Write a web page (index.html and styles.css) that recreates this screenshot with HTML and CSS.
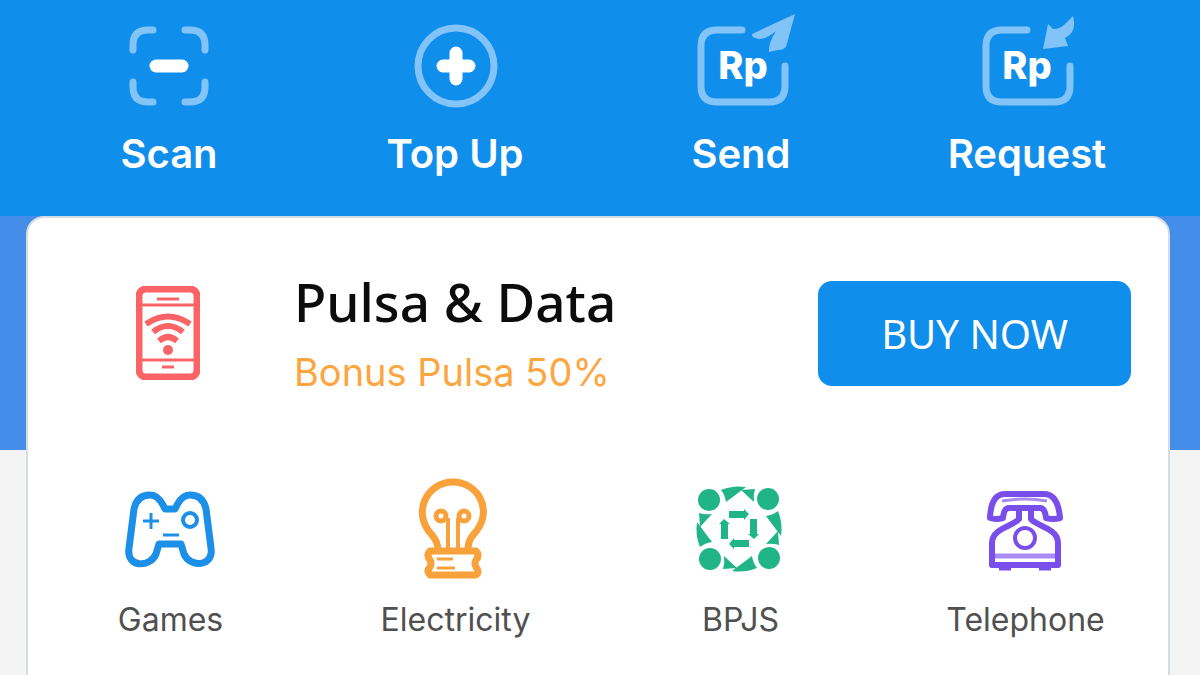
FILE: index.html
```html
<!DOCTYPE html>
<html lang="id">
<head>
<meta charset="UTF-8">
<meta name="viewport" content="width=device-width, initial-scale=1.0">
<title>Wallet</title>
<link rel="stylesheet" href="styles.css">
</head>
<body>

<nav class="actions">
    <a class="action" href="#scan">
        <svg class="action-icon" viewBox="0 0 120 100" fill="none" stroke-linecap="round">
            <path class="soft" d="M24 50V45Q24 30 39 30H44M76 30H81Q96 30 96 45V50M24 82V87Q24 102 39 102H44M76 102H81Q96 102 96 87V82"/>
            <path class="bar" d="M47 66H73"/>
        </svg>
        <span>Scan</span>
    </a>
    <a class="action" href="#topup">
        <svg class="action-icon" viewBox="0 0 120 100" fill="none" stroke-linecap="round">
            <circle class="soft" cx="61" cy="66" r="38"/>
            <path class="bar" d="M48 66H74M61 53V79"/>
        </svg>
        <span>Top Up</span>
    </a>
    <a class="action" href="#send">
        <svg class="action-icon" viewBox="0 0 120 100" fill="none" stroke-linecap="round">
            <path class="soft" d="M61 30H36Q20 30 20 46V86Q20 102 36 102H88Q104 102 104 86V66"/>
            <path class="plane" d="M114 14L105 47Q102 50 97 50L88 52Q87 44 95 31Q86 39 78 39Q70 38 71 34Z"/>
            <text class="rp" x="62" y="79">Rp</text>
        </svg>
        <span>Send</span>
    </a>
    <a class="action" href="#request">
        <svg class="action-icon" viewBox="0 0 120 100" fill="none" stroke-linecap="round">
            <path class="soft" d="M60 30H35Q19 30 19 46V86Q19 102 35 102H87Q103 102 103 86V66"/>
            <path class="plane" d="M106 16C109 27 106 34 98 38L101 46L76 49L81 24L86 29Q94 29 99 23Z"/>
            <text class="rp" x="60" y="79">Rp</text>
        </svg>
        <span>Request</span>
    </a>
</nav>

<main class="content">
    <div class="card">
        <section class="promo">
            <svg class="phone" viewBox="0 0 64 94" fill="none" stroke="#fb6467">
                <rect x="3" y="3" width="58" height="88" rx="7" stroke-width="7"/>
                <path d="M4 19H60M4 74H60" stroke-width="3"/>
                <path d="M21 13H43M26 81H38" stroke-width="3"/>
                <path d="M10 38Q32 23 54 38M17 46Q32 34 47 46M23 55Q32 47 41 55" stroke-width="6"/>
                <circle cx="32" cy="64" r="5" fill="#fb6467" stroke="none"/>
            </svg>
            <div class="promo-text">
                <h1>Pulsa &amp; Data</h1>
                <p>Bonus Pulsa 50%</p>
            </div>
            <button class="buy" type="button">BUY NOW</button>
        </section>

        <section class="services">
            <a class="service" href="#games">
                <svg class="service-icon" viewBox="0 0 100 104" fill="none" stroke="#1c8fe8" stroke-linejoin="round">
                    <path d="M29 19Q16 19 13 33L8 72C5 92 29 92 35 78L38 68H60L63 78C69 92 93 91 90 72L85 33Q82 19 69 19Q61 19 56 29L54 33H44L42 29Q37 19 29 19Z" stroke-width="7"/>
                    <path d="M22 45H38M30 37V53M42 59H58" stroke-width="3"/>
                    <circle cx="69" cy="44" r="7" stroke-width="4"/>
                </svg>
                <span>Games</span>
            </a>
            <a class="service" href="#electricity">
                <svg class="service-icon" viewBox="0 0 100 104" fill="none" stroke="#f9a13a" stroke-linejoin="round">
                    <path d="M32 74Q32 66 26 59C5 37 21 6 47 6C73 6 89 37 67 59Q62 65 62 74" stroke-width="7"/>
                    <path d="M42 73V42M52 73V42" stroke-width="4"/>
                    <circle cx="35" cy="40" r="5" stroke-width="5"/>
                    <circle cx="58" cy="40" r="5" stroke-width="5"/>
                    <path d="M24 75H70Q74 79 70 84Q68 87 70 91Q74 96 70 99H24Q20 95 24 91Q26 87 24 84Q20 79 24 75Z" stroke-width="7"/>
                    <path d="M31 83H47M31 92H49" stroke-width="3"/>
                </svg>
                <span>Electricity</span>
            </a>
            <a class="service" href="#bpjs">
                <svg class="service-icon" viewBox="-50 -53 100 104" fill="#20b486">
                    <defs>
                        <g id="quarter">
                            <circle cx="-30" cy="-29" r="11"/>
                            <path d="M-18 -39Q-6 -44 7 -42L-13 -27Q-14 -34 -18 -39ZM2 -39L16 -40Q14 -34 15 -27Z"/>
                            <path d="M-10 -18H5V-20L10 -15L5 -9V-11H-10Z"/>
                        </g>
                    </defs>
                    <g transform="translate(-2 0)">
                        <use href="#quarter"/>
                        <use href="#quarter" transform="rotate(90)"/>
                        <use href="#quarter" transform="rotate(180)"/>
                        <use href="#quarter" transform="rotate(270)"/>
                    </g>
                </svg>
                <span>BPJS</span>
            </a>
            <a class="service" href="#telephone">
                <svg class="service-icon" viewBox="0 0 100 104" fill="none" stroke="#7a4eea" stroke-linejoin="round">
                    <path d="M29 18H68Q82 18 84 42Q77 44 70 42Q69 32 64 32H33Q28 32 27 42Q20 44 14 42Q15 18 29 18Z" stroke-width="6"/>
                    <path d="M26 25Q49 21 71 25" stroke="#a98af3" stroke-width="3"/>
                    <path d="M43 34V43C38 50 16 52 16 67V89H82V67C82 52 60 50 55 43V34" stroke-width="6"/>
                    <circle cx="49" cy="62" r="10" stroke-width="4"/>
                    <path d="M19 80H79" stroke="#a98af3" stroke-width="5"/>
                    <path d="M23 92H35M63 92H75" stroke-width="5"/>
                </svg>
                <span>Telephone</span>
            </a>
        </section>
    </div>
</main>

</body>
</html>
```

FILE: styles.css
```css
* {
    box-sizing: border-box;
}
body {
    margin: 0;
    min-height: 100vh;
    display: flex;
    flex-direction: column;
    background-color: #f4f4f4;
    font-family: Inter, "Liberation Sans", sans-serif;
}
a {
    text-decoration: none;
}
.actions {
    display: grid;
    grid-template-columns: repeat(4, 1fr);
    height: 216px;
    padding: 0 30px 0 26px;
    background-color: #108eeb;
}
.action {
    display: flex;
    flex-direction: column;
    align-items: center;
    gap: 30px;
    color: white;
    font-size: 40px;
    font-weight: 600;
    line-height: 48px;
}
.action-icon {
    width: 120px;
    height: 100px;
    overflow: visible;
}
.soft {
    stroke: #82c3f8;
    stroke-width: 7px;
}
.bar {
    stroke: white;
    stroke-width: 13px;
}
.plane {
    fill: #82c3f8;
}
.rp {
    fill: white;
    font-size: 38px;
    font-weight: 800;
    text-anchor: middle;
}
.content {
    flex: 1;
    display: flex;
    padding: 0 30px 0 26px;
    /* blue strip behind the upper part of the card */
    background: linear-gradient(#448de9 234px, #f4f4f4 234px);
}
.card {
    flex: 1;
    border: 2px solid #d5dce3;
    border-bottom: none;
    border-radius: 18px 18px 0 0;
    background-color: white;
}
.promo {
    display: flex;
    align-items: center;
    padding: 52px 37px 80px 108px;
}
.phone {
    width: 64px;
    height: 94px;
}
.promo-text {
    flex: 1;
    padding-left: 94px;
}
.promo-text h1 {
    margin: 0;
    font-family: "Noto Sans", "Open Sans", sans-serif;
    font-size: 53px;
    font-weight: 500;
    line-height: 64px;
    color: #0c0c0c;
}
.promo-text p {
    margin: 14px 0 0;
    font-size: 38px;
    line-height: 48px;
    color: #fda63f;
}
.buy {
    width: 313px;
    height: 105px;
    border: none;
    border-radius: 14px;
    background-color: #108eeb;
    color: white;
    font-family: "Noto Sans", "Open Sans", sans-serif;
    font-size: 40px;
    cursor: pointer;
}
.services {
    display: grid;
    grid-template-columns: repeat(4, 1fr);
}
.service {
    display: flex;
    flex-direction: column;
    align-items: center;
    gap: 20px;
    color: #505050;
    font-size: 32px;
    line-height: 40px;
}
.service-icon {
    width: 100px;
    height: 104px;
}
```
